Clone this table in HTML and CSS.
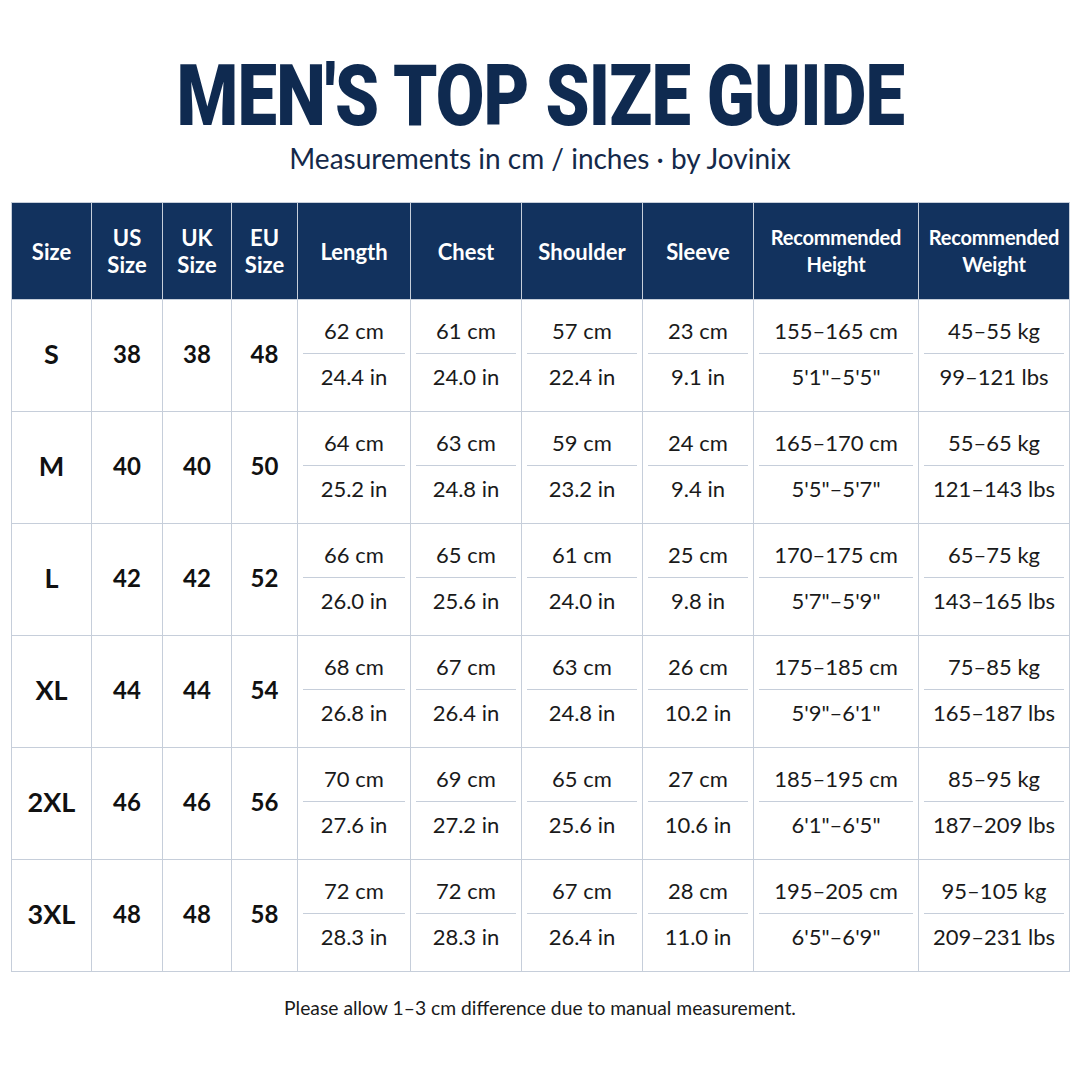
FILE: index.html
```html
<!DOCTYPE html>
<html lang="en">
<head>
<meta charset="utf-8">
<title>Men's Top Size Guide</title>
<link rel="stylesheet" href="styles.css">
</head>
<body>
<div class="page">
  <header class="head">
    <h1 class="title"><span class="title-inner">MEN'S TOP SIZE GUIDE</span></h1>
    <p class="subtitle">Measurements in cm / inches · by Jovinix</p>
  </header>
  <table class="guide">
    <colgroup>
      <col style="width:80px"><col style="width:71px"><col style="width:69px"><col style="width:66px">
      <col style="width:113px"><col style="width:111px"><col style="width:121px"><col style="width:111px">
      <col style="width:165px"><col style="width:151px">
    </colgroup>
    <thead>
      <tr>
        <th>Size</th><th>US<br>Size</th><th>UK<br>Size</th><th>EU<br>Size</th>
        <th>Length</th><th>Chest</th><th>Shoulder</th><th>Sleeve</th>
        <th class="rec">Recommended<br>Height</th><th class="rec">Recommended<br>Weight</th>
      </tr>
    </thead>
    <tbody>
      <tr>
        <td class="sz">S</td><td class="num">38</td><td class="num">38</td><td class="num">48</td>
        <td><div class="pair"><span>62 cm</span><span>24.4 in</span></div></td>
        <td><div class="pair"><span>61 cm</span><span>24.0 in</span></div></td>
        <td><div class="pair"><span>57 cm</span><span>22.4 in</span></div></td>
        <td><div class="pair"><span>23 cm</span><span>9.1 in</span></div></td>
        <td><div class="pair"><span>155–165 cm</span><span>5'1"–5'5"</span></div></td>
        <td><div class="pair"><span>45–55 kg</span><span>99–121 lbs</span></div></td>
      </tr>
      <tr>
        <td class="sz">M</td><td class="num">40</td><td class="num">40</td><td class="num">50</td>
        <td><div class="pair"><span>64 cm</span><span>25.2 in</span></div></td>
        <td><div class="pair"><span>63 cm</span><span>24.8 in</span></div></td>
        <td><div class="pair"><span>59 cm</span><span>23.2 in</span></div></td>
        <td><div class="pair"><span>24 cm</span><span>9.4 in</span></div></td>
        <td><div class="pair"><span>165–170 cm</span><span>5'5"–5'7"</span></div></td>
        <td><div class="pair"><span>55–65 kg</span><span>121–143 lbs</span></div></td>
      </tr>
      <tr>
        <td class="sz">L</td><td class="num">42</td><td class="num">42</td><td class="num">52</td>
        <td><div class="pair"><span>66 cm</span><span>26.0 in</span></div></td>
        <td><div class="pair"><span>65 cm</span><span>25.6 in</span></div></td>
        <td><div class="pair"><span>61 cm</span><span>24.0 in</span></div></td>
        <td><div class="pair"><span>25 cm</span><span>9.8 in</span></div></td>
        <td><div class="pair"><span>170–175 cm</span><span>5'7"–5'9"</span></div></td>
        <td><div class="pair"><span>65–75 kg</span><span>143–165 lbs</span></div></td>
      </tr>
      <tr>
        <td class="sz">XL</td><td class="num">44</td><td class="num">44</td><td class="num">54</td>
        <td><div class="pair"><span>68 cm</span><span>26.8 in</span></div></td>
        <td><div class="pair"><span>67 cm</span><span>26.4 in</span></div></td>
        <td><div class="pair"><span>63 cm</span><span>24.8 in</span></div></td>
        <td><div class="pair"><span>26 cm</span><span>10.2 in</span></div></td>
        <td><div class="pair"><span>175–185 cm</span><span>5'9"–6'1"</span></div></td>
        <td><div class="pair"><span>75–85 kg</span><span>165–187 lbs</span></div></td>
      </tr>
      <tr>
        <td class="sz">2XL</td><td class="num">46</td><td class="num">46</td><td class="num">56</td>
        <td><div class="pair"><span>70 cm</span><span>27.6 in</span></div></td>
        <td><div class="pair"><span>69 cm</span><span>27.2 in</span></div></td>
        <td><div class="pair"><span>65 cm</span><span>25.6 in</span></div></td>
        <td><div class="pair"><span>27 cm</span><span>10.6 in</span></div></td>
        <td><div class="pair"><span>185–195 cm</span><span>6'1"–6'5"</span></div></td>
        <td><div class="pair"><span>85–95 kg</span><span>187–209 lbs</span></div></td>
      </tr>
      <tr>
        <td class="sz">3XL</td><td class="num">48</td><td class="num">48</td><td class="num">58</td>
        <td><div class="pair"><span>72 cm</span><span>28.3 in</span></div></td>
        <td><div class="pair"><span>72 cm</span><span>28.3 in</span></div></td>
        <td><div class="pair"><span>67 cm</span><span>26.4 in</span></div></td>
        <td><div class="pair"><span>28 cm</span><span>11.0 in</span></div></td>
        <td><div class="pair"><span>195–205 cm</span><span>6'5"–6'9"</span></div></td>
        <td><div class="pair"><span>95–105 kg</span><span>209–231 lbs</span></div></td>
      </tr>
    </tbody>
  </table>
  <p class="note">Please allow 1–3 cm difference due to manual measurement.</p>
</div>
</body>
</html>
```

FILE: styles.css
```css
html, body {
  margin: 0;
  padding: 0;
  background: #ffffff;
}
.page {
  width: 1080px;
  height: 1080px;
  box-sizing: border-box;
  padding: 0 11px;
  font-family: Lato, "Noto Sans", sans-serif;
  color: #111111;
}
.head {
  text-align: center;
  padding-top: 56px;
}
.title {
  margin: 0;
  height: 80px;
  line-height: 80px;
  font-family: Roboto, "Noto Sans", sans-serif;
  font-weight: 900;
  font-size: 85px;
  color: #0f2a50;
  white-space: nowrap;
}
.title-inner {
  display: inline-block;
  transform: scaleX(0.83);
  letter-spacing: -1px;
}
.subtitle {
  margin: 6px 0 0;
  font-size: 28px;
  line-height: 32px;
  color: #14294a;
}
.guide {
  margin-top: 28px;
  width: 1058px;
  border-collapse: collapse;
  table-layout: fixed;
}
.guide th {
  background: #12325e;
  color: #ffffff;
  font-family: Lato, "Noto Sans", sans-serif;
  font-weight: 700;
  font-size: 22px;
  line-height: 27px;
  height: 96px;
  padding: 0;
  border: 1.5px solid #c6ceda;
  text-align: center;
  vertical-align: middle;
}
.guide th.rec {
  font-size: 20px;
  letter-spacing: -0.2px;
}
.guide td {
  height: 107px;
  padding: 0 5px 4px;
  border: 1.5px solid #c6ceda;
  text-align: center;
  vertical-align: middle;
  font-size: 22px;
  color: #1a1a1a;
}
.guide td.sz {
  font-size: 27px;
  font-weight: 700;
  color: #111111;
}
.guide td.num {
  font-size: 24px;
  font-weight: 700;
  color: #111111;
}
.pair {
  display: flex;
  flex-direction: column;
}
.pair span {
  display: block;
  height: 45px;
  line-height: 45px;
}
.pair span:first-child {
  border-bottom: 1.5px solid #c6ceda;
}
.note {
  margin: 24px 0 0;
  text-align: center;
  font-size: 19.3px;
  color: #1a1a1a;
}
```
